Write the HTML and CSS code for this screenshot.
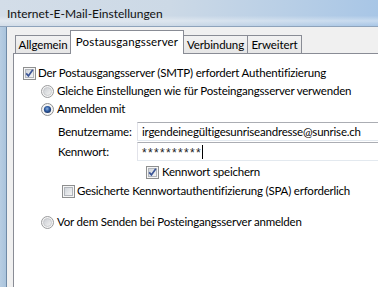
FILE: index.html
```html
<!DOCTYPE html>
<html lang="de">
<head>
<meta charset="utf-8">
<link rel="stylesheet" href="styles.css">
</head>
<body>
<div class="window">
  <div class="titlebar">Internet-E-Mail-Einstellungen</div>
  <div class="body">
    <div class="frame"></div>
    <div class="client">
      <div class="tabstrip">
        <div class="tab t1">Allgemein</div>
        <div class="tab active t2">Postausgangsserver</div>
        <div class="tab t3">Verbindung</div>
        <div class="tab t4">Erweitert</div>
      </div>
      <div class="panel">
        <div class="row r1">
          <svg class="cb" width="13" height="13" viewBox="0 0 13 13"><defs><linearGradient id="g1" x1="0" y1="0" x2="1" y2="1"><stop offset="0" stop-color="#cdd2d8"/><stop offset="1" stop-color="#f7f7f7"/></linearGradient></defs><rect x="0.5" y="0.5" width="12" height="12" fill="#f6f6f6" stroke="#8e8f8f"/><rect x="2.5" y="2.5" width="8" height="8" fill="url(#g1)" stroke="#b2b6bc"/><path d="M3.2 6.4 L5.4 8.9 L9.8 2.8" fill="none" stroke="#3b5597" stroke-width="1.7"/></svg>
          <span class="lbl">Der Postausgangsserver (SMTP) erfordert Authentifizierung</span>
        </div>
        <div class="row r2 indent">
          <svg class="rb" width="13" height="13" viewBox="0 0 13 13"><defs><linearGradient id="g2" x1="0" y1="0" x2="1" y2="1"><stop offset="0" stop-color="#c9ccd1"/><stop offset="1" stop-color="#f4f4f4"/></linearGradient></defs><circle cx="6.5" cy="6.5" r="6" fill="#f4f4f4" stroke="#9a9b9d"/><circle cx="6.5" cy="6.5" r="4" fill="url(#g2)" stroke="#c2c4c8" stroke-width="0.8"/></svg>
          <span class="lbl">Gleiche Einstellungen wie für Posteingangsserver verwenden</span>
        </div>
        <div class="row r3 indent">
          <svg class="rb" width="13" height="13" viewBox="0 0 13 13"><defs><radialGradient id="g3" cx="0.45" cy="0.4" r="0.6"><stop offset="0" stop-color="#8fb2e0"/><stop offset="0.55" stop-color="#2d5aa0"/><stop offset="1" stop-color="#1a3466"/></radialGradient></defs><circle cx="6.5" cy="6.5" r="6" fill="#f4f4f4" stroke="#8e8f8f"/><circle cx="6.5" cy="6.5" r="3.6" fill="url(#g3)"/></svg>
          <span class="lbl">Anmelden mit</span>
        </div>
        <div class="field f1">
          <span class="flabel">Benutzername:</span>
          <div class="input">irgendeinegültigesunriseandresse@sunrise.ch</div>
        </div>
        <div class="field f2">
          <span class="flabel">Kennwort:</span>
          <div class="input pw"><span class="stars">**********</span><span class="caret"></span></div>
        </div>
        <div class="row r6">
          <svg class="cb" width="13" height="13" viewBox="0 0 13 13"><defs><linearGradient id="g4" x1="0" y1="0" x2="1" y2="1"><stop offset="0" stop-color="#cdd2d8"/><stop offset="1" stop-color="#f7f7f7"/></linearGradient></defs><rect x="0.5" y="0.5" width="12" height="12" fill="#f6f6f6" stroke="#8e8f8f"/><rect x="2.5" y="2.5" width="8" height="8" fill="url(#g4)" stroke="#b2b6bc"/><path d="M3.2 6.4 L5.4 8.9 L9.8 2.8" fill="none" stroke="#3b5597" stroke-width="1.7"/></svg>
          <span class="lbl">Kennwort speichern</span>
        </div>
        <div class="row r7">
          <svg class="cb" width="13" height="13" viewBox="0 0 13 13"><defs><linearGradient id="g5" x1="0" y1="0" x2="1" y2="1"><stop offset="0" stop-color="#cdd2d8"/><stop offset="1" stop-color="#f7f7f7"/></linearGradient></defs><rect x="0.5" y="0.5" width="12" height="12" fill="#f6f6f6" stroke="#8e8f8f"/><rect x="2.5" y="2.5" width="8" height="8" fill="url(#g5)" stroke="#b2b6bc"/></svg>
          <span class="lbl">Gesicherte Kennwortauthentifizierung (SPA) erforderlich</span>
        </div>
        <div class="row r8 indent">
          <svg class="rb" width="13" height="13" viewBox="0 0 13 13"><defs><linearGradient id="g6" x1="0" y1="0" x2="1" y2="1"><stop offset="0" stop-color="#c9ccd1"/><stop offset="1" stop-color="#f4f4f4"/></linearGradient></defs><circle cx="6.5" cy="6.5" r="6" fill="#f4f4f4" stroke="#9a9b9d"/><circle cx="6.5" cy="6.5" r="4" fill="url(#g6)" stroke="#c2c4c8" stroke-width="0.8"/></svg>
          <span class="lbl">Vor dem Senden bei Posteingangsserver anmelden</span>
        </div>
      </div>
    </div>
  </div>
</div>
</body>
</html>
```

FILE: styles.css
```css
html, body {
  margin: 0;
  padding: 0;
  width: 378px;
  height: 287px;
  overflow: hidden;
  background: #f0f0f0;
}
.window {
  width: 378px;
  height: 287px;
  display: flex;
  flex-direction: column;
  font-family: "Lato", "Noto Sans", sans-serif;
  font-size: 11.5px;
  letter-spacing: -0.2px;
  color: #000;
}
.titlebar {
  height: 27px;
  flex: none;
  box-sizing: border-box;
  padding: 5px 0 0 7px;
  font-size: 12px;
  letter-spacing: 0;
  line-height: 17px;
  color: #111;
  background:
    linear-gradient(to bottom, rgba(255,255,255,0) 60%, rgba(255,255,255,0.35) 80%, rgba(255,255,255,0) 100%),
    linear-gradient(to right, #d3dde8 0%, #ccd9e6 45%, #b9cfe6 75%, #a8c6e6 100%);
  border-bottom: 1px solid #8ea3bb;
}
.body {
  flex: 1;
  display: flex;
  min-height: 0;
}
.frame {
  width: 6px;
  flex: none;
  background: linear-gradient(to right, #b7cde2, #a9c3dc);
  border-right: 1px solid #6f8aa6;
}
.client {
  flex: 1;
  background: #f0f0f0;
  padding: 3px 0 0 6px;
  display: flex;
  flex-direction: column;
  min-width: 0;
}
.tabstrip {
  display: flex;
  align-items: flex-end;
  height: 23px;
  padding-left: 2px;
  position: relative;
  z-index: 1;
  letter-spacing: -0.1px;
}
.tab {
  box-sizing: border-box;
  height: 18px;
  border: 1px solid #898c95;
  border-bottom: none;
  background: linear-gradient(to bottom, #f2f2f2, #e6e6e6);
  text-align: center;
  line-height: 16px;
  padding-top: 1px;
  margin-left: -1px;
  white-space: nowrap;
}
.t1 { width: 56px; margin-left: 0; }
.t2 { width: 114px; }
.t3 { width: 65px; }
.t4 { width: 55px; }
.tab.active {
  height: 24px;
  margin-bottom: -1px;
  background: #fff;
  padding-top: 3px;
  position: relative;
  z-index: 2;
  letter-spacing: 0.15px;
}
.panel {
  flex: 1;
  background: #fff;
  border-top: 1px solid #898c95;
  border-left: 1px solid #898c95;
  padding: 10px 0 0 9px;
  display: flex;
  flex-direction: column;
  align-items: flex-start;
}
.row {
  height: 18px;
  display: flex;
  align-items: center;
  white-space: nowrap;
}
.row svg { flex: none; }
.row .lbl { margin-left: 2px; line-height: 18px; }
.indent { margin-left: 18px; }
.indent .lbl { margin-left: 3px; }
.field {
  display: flex;
  align-items: center;
  margin-left: 35px;
  height: 19px;
  white-space: nowrap;
}
.f1 { margin-top: 4px; }
.f2 { margin-top: 1px; }
.flabel { width: 79px; flex: none; }
.input {
  box-sizing: border-box;
  width: 260px;
  height: 19px;
  flex: none;
  border: 1px solid #abadb3;
  border-left-color: #e2e3ea;
  border-right-color: #dbdfe6;
  border-bottom-color: #e3e9ef;
  padding: 0 0 0 4px;
  line-height: 17px;
  display: flex;
  align-items: center;
}
.stars {
  font-family: "Liberation Sans", sans-serif;
  font-size: 12px;
  letter-spacing: 1.33px;
  color: #222;
  position: relative;
  top: 2px;
}
.caret {
  display: inline-block;
  width: 1px;
  height: 14px;
  background: #000;
  margin-left: 0;
}
.r6 { margin-top: 2px; margin-left: 123px; }
.r6 .lbl { margin-left: 3px; }
.r7 { margin-top: 1px; margin-left: 39px; }
.r8 { margin-top: 13px; }
```
